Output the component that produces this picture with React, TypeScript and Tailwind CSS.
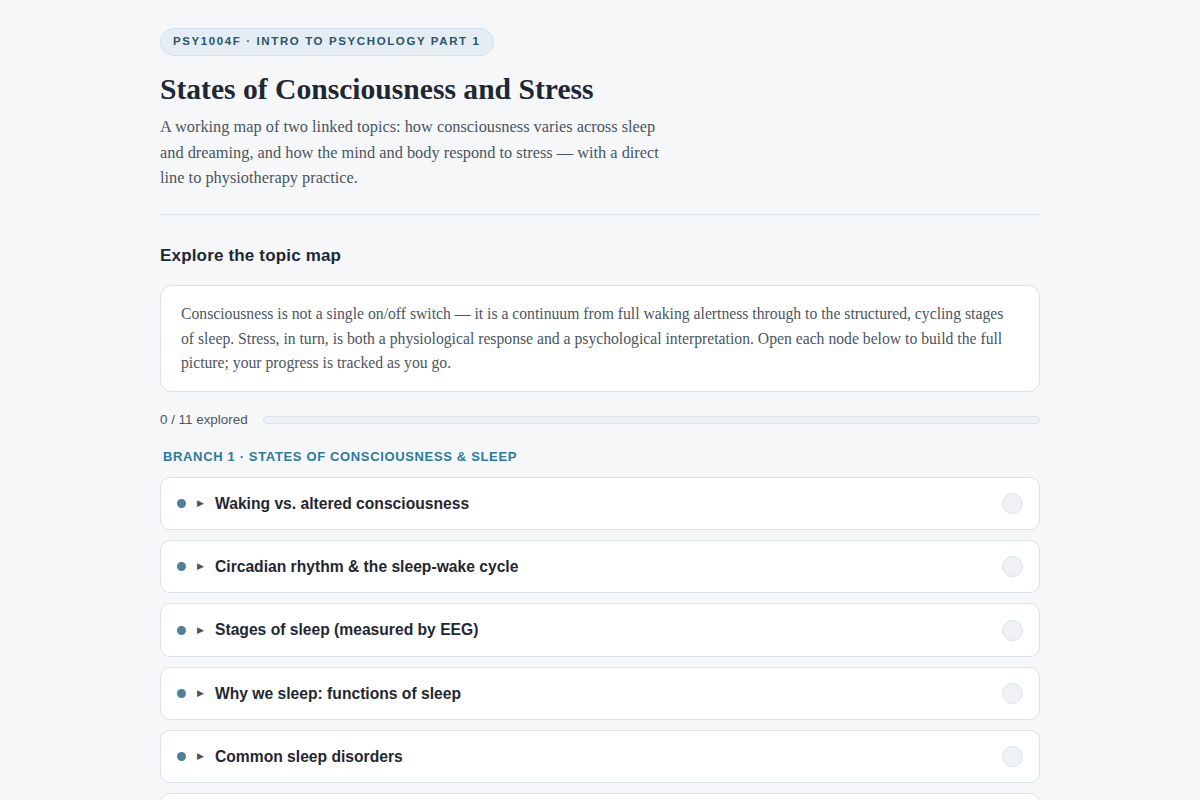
import React from "react";

const branch1 = [
  "Waking vs. altered consciousness",
  "Circadian rhythm & the sleep-wake cycle",
  "Stages of sleep (measured by EEG)",
  "Why we sleep: functions of sleep",
  "Common sleep disorders",
  "Dreams and theories of dreaming",
];

const branch2 = [
  "What is stress? Stressors and appraisal",
  "The physiology of the stress response",
  "Stress, health and illness",
  "Coping strategies",
  "Stress in physiotherapy practice",
];

function Row({ label }: { label: string }) {
  return (
    <div className="flex h-[53.2px] items-center rounded-[10px] border border-[#dbe2ea] bg-white pl-[16px] pr-[16px]">
      <span className="h-[9px] w-[9px] shrink-0 rounded-full bg-[#4f7f99]" />
      <span className="ml-[11px] text-[9px] leading-none text-[#4a5563]">▶</span>
      <span className="ml-[11px] flex-1 text-[15.65px] font-bold text-[#1f2733]" style={{ fontFamily: '"Liberation Sans", Arial, sans-serif' }}>
        {label}
      </span>
      <span className="h-[21px] w-[21px] shrink-0 rounded-full border border-[#dbe2ea] bg-[#eef1f5]" />
    </div>
  );
}

export default function App() {
  return (
    <div className="min-h-screen bg-[#f5f7f9]" style={{ fontFamily: '"Liberation Sans", Arial, sans-serif' }}>
      <div className="mx-auto w-[880px] pt-[28px] pb-10">
        <span className="inline-flex h-[28px] items-center rounded-full border border-[#d3e1ea] bg-[#e3edf3] px-[12px] text-[11.5px] font-bold uppercase tracking-[0.14em] text-[#2b5468]">
          PSY1004F · Intro to Psychology Part 1
        </span>
        <h1 className="mt-[15px] text-[29.6px] font-bold leading-[36px] text-[#1f2733]" style={{ fontFamily: '"Liberation Serif", "Times New Roman", serif' }}>
          States of Consciousness and Stress
        </h1>
        <p className="mt-[7px] w-[510px] text-[16.35px] leading-[25.5px] text-[#4a5563]" style={{ fontFamily: '"Liberation Serif", "Times New Roman", serif' }}>
          A working map of two linked topics: how consciousness varies across sleep and dreaming, and how the mind and body respond to stress — with a direct line to physiotherapy practice.
        </p>
        <div className="mt-[23px] h-px bg-[#dbe2ea]" />
        <h2 className="mt-[28px] text-[17px] font-bold tracking-[0.01em] text-[#1f2733]">Explore the topic map</h2>
        <div className="mt-[17px] rounded-[12px] border border-[#dbe2ea] bg-white px-[20px] pt-[16px] pb-[15px]">
          <p className="text-[15.7px] leading-[24.5px] text-[#4a5563]" style={{ fontFamily: '"Liberation Serif", "Times New Roman", serif' }}>
            Consciousness is not a single on/off switch — it is a continuum from full waking alertness through to the structured, cycling stages of sleep. Stress, in turn, is both a physiological response and a psychological interpretation. Open each node below to build the full picture; your progress is tracked as you go.
          </p>
        </div>
        <div className="mt-[18px] flex items-center gap-[15px]">
          <span className="text-[13.4px] text-[#4a5563]">0 / 11 explored</span>
          <div className="h-[8px] flex-1 rounded-full border border-[#dde3ea] bg-[#edf1f5]" />
        </div>
        <div className="mt-[17px] pl-[3px] text-[13px] font-bold uppercase tracking-[0.05em] text-[#2e7a9a]">
          Branch 1 · States of Consciousness &amp; Sleep
        </div>
        <div className="mt-[11px] flex flex-col gap-[10px]">
          {branch1.map((l) => (
            <Row key={l} label={l} />
          ))}
        </div>
        <div className="mt-[21px] pl-[3px] text-[13px] font-bold uppercase tracking-[0.05em] text-[#2e7a9a]">
          Branch 2 · Stress &amp; Health
        </div>
        <div className="mt-[11px] flex flex-col gap-[10px]">
          {branch2.map((l) => (
            <Row key={l} label={l} />
          ))}
        </div>
      </div>
    </div>
  );
}
